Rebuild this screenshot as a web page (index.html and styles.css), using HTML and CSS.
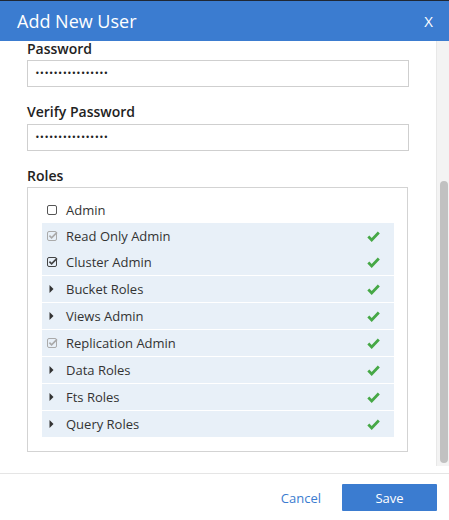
FILE: index.html
```html
<!DOCTYPE html>
<html lang="en">
<head>
<meta charset="utf-8">
<title>Add New User</title>
<link rel="stylesheet" href="styles.css">
</head>
<body>
<div class="modal">
  <header class="modal-header">
    <h1 class="modal-title">Add New User</h1>
    <span class="modal-close">X</span>
  </header>
  <div class="modal-body">
    <div class="scroll-view">
      <form class="form">
        <div class="field first">
          <label class="field-label">Password</label>
          <div class="input"><span class="dots">••••••••••••••••</span></div>
        </div>
        <div class="field">
          <label class="field-label">Verify Password</label>
          <div class="input"><span class="dots">••••••••••••••••</span></div>
        </div>
        <div class="field roles-field">
          <label class="field-label">Roles</label>
          <div class="roles-box">
            <div class="role plain">
              <span class="icon"><svg width="12" height="12" viewBox="0 0 12 12"><rect x="0.5" y="1.5" width="9" height="9" rx="1.5" fill="none" stroke="#555" stroke-width="1"/></svg></span>
              <span class="role-name">Admin</span>
            </div>
            <div class="role grouped">
              <span class="icon"><svg width="12" height="12" viewBox="0 0 12 12"><rect x="0.5" y="1.5" width="9" height="9" rx="1.5" fill="none" stroke="#aaa" stroke-width="1"/><path d="M2.4 5.6 L4.6 7.8 L10 2.4" fill="none" stroke="#aaa" stroke-width="1.7"/></svg></span>
              <span class="role-name">Read Only Admin</span>
              <span class="ok"><svg width="13" height="11" viewBox="0 0 13 11"><path d="M1.3 5.6 L4.7 8.9 L11.8 1.6" fill="none" stroke="#46a846" stroke-width="2.8"/></svg></span>
            </div>
            <div class="role">
              <span class="icon"><svg width="12" height="12" viewBox="0 0 12 12"><rect x="0.5" y="1.5" width="9" height="9" rx="1.5" fill="none" stroke="#444" stroke-width="1"/><path d="M2.4 5.6 L4.6 7.8 L10 2.4" fill="none" stroke="#444" stroke-width="1.7"/></svg></span>
              <span class="role-name">Cluster Admin</span>
              <span class="ok"><svg width="13" height="11" viewBox="0 0 13 11"><path d="M1.3 5.6 L4.7 8.9 L11.8 1.6" fill="none" stroke="#46a846" stroke-width="2.8"/></svg></span>
            </div>
            <div class="role">
              <span class="icon"><svg class="caret" width="5" height="8" viewBox="0 0 5 8"><path d="M0.5 0 L4.5 4 L0.5 8 Z" fill="#333"/></svg></span>
              <span class="role-name">Bucket Roles</span>
              <span class="ok"><svg width="13" height="11" viewBox="0 0 13 11"><path d="M1.3 5.6 L4.7 8.9 L11.8 1.6" fill="none" stroke="#46a846" stroke-width="2.8"/></svg></span>
            </div>
            <div class="role">
              <span class="icon"><svg class="caret" width="5" height="8" viewBox="0 0 5 8"><path d="M0.5 0 L4.5 4 L0.5 8 Z" fill="#333"/></svg></span>
              <span class="role-name">Views Admin</span>
              <span class="ok"><svg width="13" height="11" viewBox="0 0 13 11"><path d="M1.3 5.6 L4.7 8.9 L11.8 1.6" fill="none" stroke="#46a846" stroke-width="2.8"/></svg></span>
            </div>
            <div class="role">
              <span class="icon"><svg width="12" height="12" viewBox="0 0 12 12"><rect x="0.5" y="1.5" width="9" height="9" rx="1.5" fill="none" stroke="#aaa" stroke-width="1"/><path d="M2.4 5.6 L4.6 7.8 L10 2.4" fill="none" stroke="#aaa" stroke-width="1.7"/></svg></span>
              <span class="role-name">Replication Admin</span>
              <span class="ok"><svg width="13" height="11" viewBox="0 0 13 11"><path d="M1.3 5.6 L4.7 8.9 L11.8 1.6" fill="none" stroke="#46a846" stroke-width="2.8"/></svg></span>
            </div>
            <div class="role">
              <span class="icon"><svg class="caret" width="5" height="8" viewBox="0 0 5 8"><path d="M0.5 0 L4.5 4 L0.5 8 Z" fill="#333"/></svg></span>
              <span class="role-name">Data Roles</span>
              <span class="ok"><svg width="13" height="11" viewBox="0 0 13 11"><path d="M1.3 5.6 L4.7 8.9 L11.8 1.6" fill="none" stroke="#46a846" stroke-width="2.8"/></svg></span>
            </div>
            <div class="role">
              <span class="icon"><svg class="caret" width="5" height="8" viewBox="0 0 5 8"><path d="M0.5 0 L4.5 4 L0.5 8 Z" fill="#333"/></svg></span>
              <span class="role-name">Fts Roles</span>
              <span class="ok"><svg width="13" height="11" viewBox="0 0 13 11"><path d="M1.3 5.6 L4.7 8.9 L11.8 1.6" fill="none" stroke="#46a846" stroke-width="2.8"/></svg></span>
            </div>
            <div class="role last">
              <span class="icon"><svg class="caret" width="5" height="8" viewBox="0 0 5 8"><path d="M0.5 0 L4.5 4 L0.5 8 Z" fill="#333"/></svg></span>
              <span class="role-name">Query Roles</span>
              <span class="ok"><svg width="13" height="11" viewBox="0 0 13 11"><path d="M1.3 5.6 L4.7 8.9 L11.8 1.6" fill="none" stroke="#46a846" stroke-width="2.8"/></svg></span>
            </div>
          </div>
        </div>
      </form>
    </div>
    <div class="scrollbar"><div class="thumb"></div></div>
  </div>
  <div class="spacer"></div>
  <footer class="modal-footer">
    <button class="btn-link" type="button">Cancel</button>
    <button class="btn-primary" type="button">Save</button>
  </footer>
</div>
</body>
</html>
```

FILE: styles.css
```css
* { box-sizing: border-box; }
html, body { margin: 0; padding: 0; background: #fff; }
body { font-family: "Open Sans", "Liberation Sans", sans-serif; color: #333; }

.modal { width: 449px; height: 520px; display: flex; flex-direction: column; overflow: hidden; background: #fff; }

.modal-header {
  height: 41px;
  flex: none;
  border-top: 1px solid #1f2733;
  background: #3b7cd0;
  display: flex;
  align-items: center;
  justify-content: space-between;
  padding: 0 16px 0 17px;
  color: #fff;
}
.modal-title { margin: 0; font-size: 18px; font-weight: 400; line-height: 24px; }
.modal-close { font-size: 15px; line-height: 20px; font-weight: 400; }

.modal-body { height: 425px; flex: none; display: flex; }
.scroll-view { width: 436px; height: 425px; overflow: hidden; }
.form { margin: 0; padding: 0 27px; }

.field { margin-bottom: 15px; }
.field-label { display: block; font-size: 14px; font-weight: 600; line-height: 20px; color: #222; margin-bottom: 2px; }
.field.first .field-label { line-height: 16px; margin-bottom: 3px; }
.roles-field { margin-top: 3px; }
.roles-field .field-label { margin-bottom: 1px; }

.input {
  height: 27px;
  border: 1px solid #cfcfcf;
  display: flex;
  align-items: center;
  padding-left: 7px;
}
.dots { font-family: "DejaVu Sans", sans-serif; font-size: 8px; letter-spacing: -0.15px; color: #222; line-height: 10px; }

.roles-box {
  border: 1px solid #d3d3d3;
  margin-right: 1px;
  padding: 9px 13px 14px 14px;
}
.role {
  height: 27px;
  display: flex;
  align-items: center;
  padding: 0 14px 0 5px;
  background: #e8f0f8;
  border-bottom: 1px solid #fff;
  font-size: 13px;
}
.role.plain { background: transparent; border-bottom: 0; height: 26px; }
.role.grouped { border-bottom: 0; height: 26px; }
.role.last { border-bottom: 0; height: 26px; }
.icon { width: 12px; height: 12px; display: flex; align-items: center; flex: none; }
.icon .caret { margin-left: 2px; }
.role-name { margin-left: 7px; flex: 1; line-height: 18px; color: #333; }
.ok { display: flex; width: 13px; height: 11px; }

.scrollbar {
  width: 13px;
  height: 425px;
  background: #f3f3f3;
  border-left: 1px solid #e8e8e8;
  padding: 140px 0 0 3px;
}
.thumb { width: 8px; height: 282px; border-radius: 4px; background: #c1c1c1; }

.spacer { height: 7px; flex: none; }
.modal-footer {
  flex: 1;
  border-top: 1px solid #e5e5e5;
  display: flex;
  justify-content: flex-end;
  align-items: flex-start;
  padding: 10px 12px 0 0;
}
.btn-link {
  border: 0;
  background: none;
  font-family: inherit;
  font-size: 13px;
  color: #3b7cd0;
  height: 27px;
  padding: 0;
  margin-right: 21px;
}
.btn-primary {
  width: 95px;
  height: 27px;
  border: 0;
  border-radius: 1px;
  background: #3b7cd0;
  color: #fff;
  font-family: inherit;
  font-size: 13px;
}
```
